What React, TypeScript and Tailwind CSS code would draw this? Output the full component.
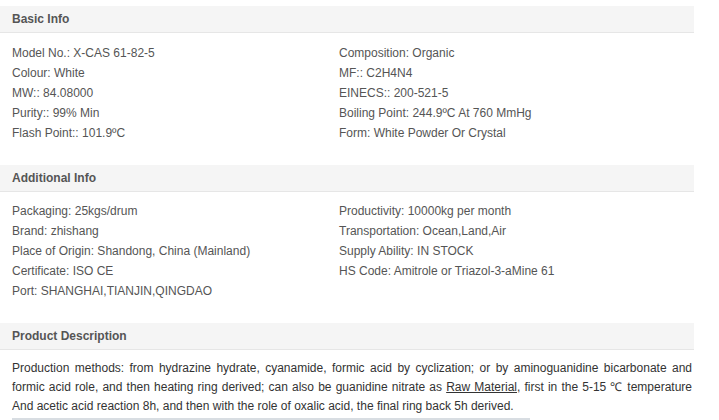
const basic: [string, string][] = [
    ["Model No.: X-CAS 61-82-5", "Composition: Organic"],
    ["Colour: White", "MF:: C2H4N4"],
    ["MW:: 84.08000", "EINECS:: 200-521-5"],
    ["Purity:: 99% Min", "Boiling Point: 244.9ºC At 760 MmHg"],
    ["Flash Point:: 101.9ºC", "Form: White Powder Or Crystal"],
];

const additional: [string, string][] = [
    ["Packaging: 25kgs/drum", "Productivity: 10000kg per month"],
    ["Brand: zhishang", "Transportation: Ocean,Land,Air"],
    ["Place of Origin: Shandong, China (Mainland)", "Supply Ability: IN STOCK"],
    ["Certificate: ISO CE", "HS Code: Amitrole or Triazol-3-aMine 61"],
    ["Port: SHANGHAI,TIANJIN,QINGDAO", ""],
];

const SectionHead = ({ title }: { title: string }) => (
    <div className="h-[27px] bg-[#f5f5f5] border-b border-[#e6e6e6] pl-3 flex items-center">
        <h2 className="text-[12px] font-bold text-[#555]">{title}</h2>
    </div>
);

const InfoGrid = ({ rows, top }: { rows: [string, string][]; top: string }) => (
    <div className={`grid grid-cols-[327px_1fr] pl-3 text-[12px] leading-[20px] text-[#555] ${top}`}>
        {rows.map(([left, right], i) => (
            <div key={i} className="contents">
                <span>{left}</span>
                <span>{right}</span>
            </div>
        ))}
    </div>
);

export default function App() {
    return (
        <div className="w-[719px] h-[420px] overflow-hidden bg-white font-['Liberation_Sans',Arial,sans-serif]">
            <div className="w-[694px] pt-[6px]">
                <SectionHead title="Basic Info" />
                <InfoGrid rows={basic} top="pt-[10px]" />
                <div className="h-[22px]" />
                <SectionHead title="Additional Info" />
                <InfoGrid rows={additional} top="pt-[9px]" />
                <div className="h-[22px]" />
                <SectionHead title="Product Description" />
                <p className="pl-3 pr-[2px] pt-[9px] text-[12px] leading-[19px] text-[#333] text-justify">
                    Production methods: from hydrazine hydrate, cyanamide, formic acid by cyclization; or by
                    aminoguanidine bicarbonate and formic acid role, and then heating ring derived; can also be
                    guanidine nitrate as <span className="underline">Raw Material</span>, first in the 5-15 ℃
                    temperature And acetic acid reaction 8h, and then with the role of oxalic acid, the final ring
                    back 5h derived.
                </p>
                <div className="ml-3 mt-[2px] w-[518px] h-[2px] bg-[#d8dde2]" />
            </div>
        </div>
    );
}
